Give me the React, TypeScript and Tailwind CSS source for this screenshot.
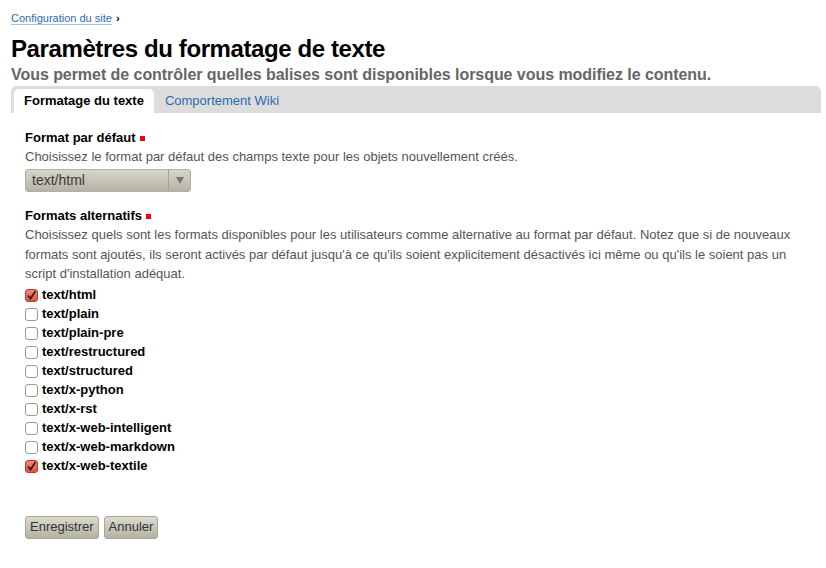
import React from "react";

const formats = [
  { name: "text/html", checked: true },
  { name: "text/plain", checked: false },
  { name: "text/plain-pre", checked: false },
  { name: "text/restructured", checked: false },
  { name: "text/structured", checked: false },
  { name: "text/x-python", checked: false },
  { name: "text/x-rst", checked: false },
  { name: "text/x-web-intelligent", checked: false },
  { name: "text/x-web-markdown", checked: false },
  { name: "text/x-web-textile", checked: true },
];

function Required() {
  return <span className="ml-1 inline-block h-[5px] w-[5px] bg-[#ff0000] align-middle" />;
}

function Checkbox({ checked }: { checked: boolean }) {
  if (checked) {
    return (
      <span className="flex h-[13px] w-[13px] items-center justify-center rounded-[3px] border border-[#c0392b] bg-gradient-to-b from-[#f28a76] to-[#e0503a]">
        <svg width="11" height="11" viewBox="0 0 11 11">
          <path d="M2 5.5 L4.5 8.5 L9.5 1" fill="none" stroke="#222" strokeWidth="1.8" />
        </svg>
      </span>
    );
  }
  return <span className="h-[13px] w-[13px] rounded-[3px] border border-[#9a9a94] bg-white" />;
}

export default function App() {
  return (
    <div className="min-h-[568px] bg-white pl-[11px] pr-[5px] pt-[11px] font-['Liberation_Sans',Arial,sans-serif] text-black">
      <div className="text-[11px] leading-[14px]">
        <a className="border-b border-[#a9c0d9] text-[#2d6bb0]" href="#">Configuration du site</a>
        <span className="ml-1 font-bold">›</span>
      </div>
      <h1 className="mt-[9px] text-[24px] font-bold leading-[30px] tracking-[-0.4px]">Paramètres du formatage de texte</h1>
      <p className="mt-[2px] text-[16px] font-bold leading-[18px] tracking-[-0.05px] text-[#666]">
        Vous permet de contrôler quelles balises sont disponibles lorsque vous modifiez le contenu.
      </p>
      <div className="mt-[2px] flex h-[27px] items-end rounded-t-[6px] bg-[#dcdcdc] pl-[3px]">
        <div className="flex h-[24px] items-center rounded-t-[5px] bg-white px-[10px] text-[13px] font-bold">Formatage du texte</div>
        <div className="flex h-[24px] items-center px-[11px] text-[13px] text-[#2d6bb0]">Comportement Wiki</div>
      </div>

      <div className="px-[14px] pt-[16px] text-[13px]">
        <div className="font-bold leading-[18px]">
          Format par défaut
          <Required />
        </div>
        <div className="leading-[19px] text-[#555]">Choisissez le format par défaut des champs texte pour les objets nouvellement créés.</div>
        <div className="mt-[3px] flex h-[23px] w-[166px] items-stretch rounded-[3px] border border-[#b3b0a4] bg-gradient-to-b from-[#d8d6cb] to-[#b5b3a6] text-[14px] text-[#3a3a3a]">
          <span className="flex flex-1 items-center pl-[6px]">text/html</span>
          <span className="flex w-[22px] items-center justify-center border-l border-[#a7a598]">
            <svg width="8" height="7" viewBox="0 0 8 7">
              <path d="M0 0 H8 L4 7 Z" fill="#777" />
            </svg>
          </span>
        </div>

        <div className="mt-[15px] font-bold leading-[18px]">
          Formats alternatifs
          <Required />
        </div>
        <div className="pr-[6px] leading-[19.5px] text-[#555]">
          Choisissez quels sont les formats disponibles pour les utilisateurs comme alternative au format par défaut. Notez que si de nouveaux formats sont ajoutés, ils seront activés par défaut jusqu'à ce qu'ils soient explicitement désactivés ici même ou qu'ils le soient pas un script d'installation adéquat.
        </div>
        <ul className="mt-[2px] flex flex-col">
          {formats.map((f) => (
            <li key={f.name} className="flex h-[19px] items-center gap-[4px] font-bold">
              <Checkbox checked={f.checked} />
              <span>{f.name}</span>
            </li>
          ))}
        </ul>

        <div className="mt-[40px] flex gap-[5px]">
          <button className="h-[23px] rounded-[3px] border border-[#a8a597] bg-gradient-to-b from-[#dcdacf] to-[#b4b2a5] px-[4px] text-[13px] text-[#333]">Enregistrer</button>
          <button className="h-[23px] rounded-[3px] border border-[#a8a597] bg-gradient-to-b from-[#dcdacf] to-[#b4b2a5] px-[4px] text-[13px] text-[#333]">Annuler</button>
        </div>
      </div>
    </div>
  );
}
